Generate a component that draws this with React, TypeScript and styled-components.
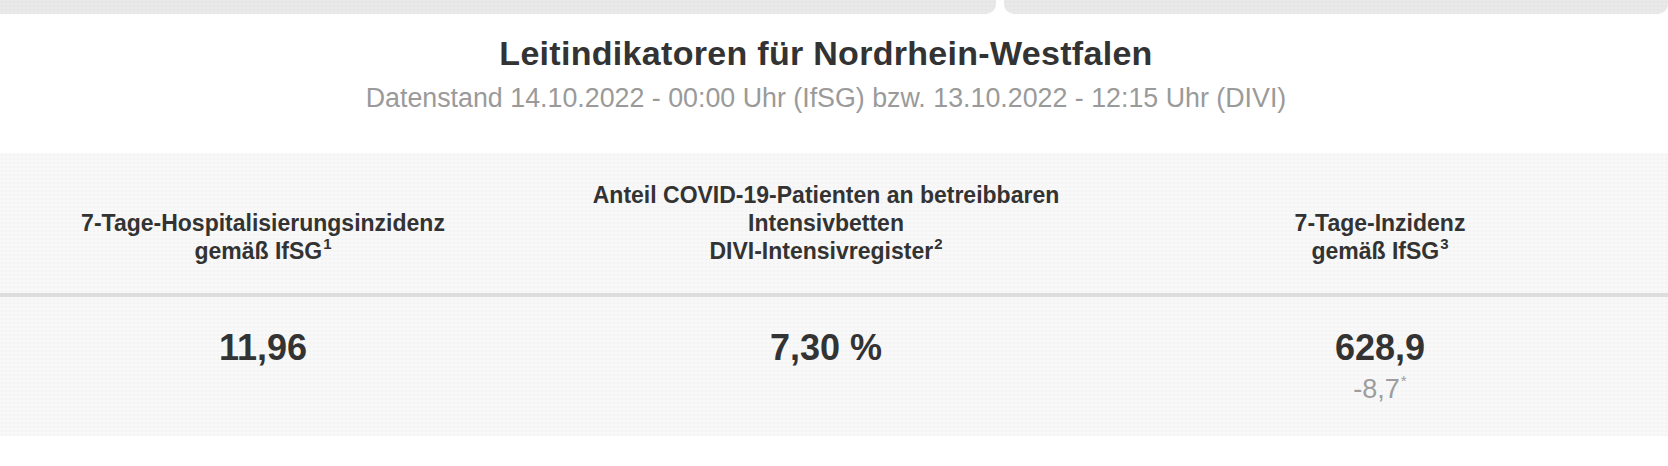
import React from "react";
import styled, { createGlobalStyle } from "styled-components";

const GlobalStyle = createGlobalStyle`
  html, body {
    margin: 0;
    padding: 0;
    background: #ffffff;
    font-family: "Liberation Sans", Arial, Helvetica, sans-serif;
    color: #333333;
  }
  * { box-sizing: border-box; }
`;

const Page = styled.div`
  width: 1668px;
  display: flex;
  flex-direction: column;
`;

const TabBar = styled.div`
  display: flex;
  gap: 8px;
  height: 14px;
`;

const Tab = styled.div<{ $grow: number; $flushLeft?: boolean }>`
  flex: ${(p) => p.$grow} 1 0;
  background-color: #e9e9e9;
  background-image: radial-gradient(#e4e4e4 0.7px, transparent 0.8px);
  background-size: 4px 4px;
  border-radius: ${(p) => (p.$flushLeft ? "0 0 10px 0" : "0 0 10px 10px")};
`;

const Heading = styled.header`
  display: flex;
  flex-direction: column;
  align-items: center;
  padding: 19px 16px 40px 0;
`;

const Title = styled.h1`
  margin: 0;
  font-size: 34px;
  line-height: 40px;
  font-weight: 700;
  color: #333333;
  letter-spacing: 0.3px;
`;

const Subtitle = styled.p`
  margin: 10px 0 0;
  font-size: 26.8px;
  line-height: 30px;
  font-weight: 400;
  color: #9a9a9a;
`;

const Table = styled.section`
  display: flex;
  flex-direction: column;
  background-color: #f8f8f8;
  background-image: radial-gradient(#f2f2f2 0.7px, transparent 0.8px);
  background-size: 4px 4px;
`;

const Row = styled.div<{ $head?: boolean }>`
  display: grid;
  grid-template-columns: 526px 600px 508px 1fr;
  align-items: ${(p) => (p.$head ? "end" : "start")};
  border-bottom: ${(p) => (p.$head ? "4px solid #dddddd" : "none")};
`;

const HeadCell = styled.div`
  padding: 28px 12px 28px;
  text-align: center;
  font-size: 23px;
  line-height: 28px;
  font-weight: 700;
  color: #333333;
`;

const Sup = styled.sup`
  font-size: 15px;
  line-height: 0;
  vertical-align: 10px;
  margin-left: 1px;
`;

const ValueCell = styled.div`
  padding: 29px 12px 28px;
  display: flex;
  flex-direction: column;
  align-items: center;
`;

const Value = styled.div`
  font-size: 36px;
  line-height: 44px;
  font-weight: 700;
  color: #333333;
`;

const Delta = styled.div`
  font-size: 27px;
  line-height: 38px;
  font-weight: 400;
  color: #9d9d9d;
`;

const DeltaMark = styled.sup`
  font-size: 15px;
  line-height: 0;
  vertical-align: 12px;
  margin-left: 1px;
`;

export default function App() {
  return (
    <>
      <GlobalStyle />
      <Page>
        <TabBar>
          <Tab $grow={3} $flushLeft />
          <Tab $grow={2} />
        </TabBar>
        <Heading>
          <Title>Leitindikatoren für Nordrhein-Westfalen</Title>
          <Subtitle>
            Datenstand 14.10.2022 - 00:00 Uhr (IfSG) bzw. 13.10.2022 - 12:15 Uhr (DIVI)
          </Subtitle>
        </Heading>
        <Table>
          <Row $head>
            <HeadCell>
              7-Tage-Hospitalisierungsinzidenz
              <br />
              gemäß IfSG<Sup>1</Sup>
            </HeadCell>
            <HeadCell>
              Anteil COVID-19-Patienten an betreibbaren
              <br />
              Intensivbetten
              <br />
              DIVI-Intensivregister<Sup>2</Sup>
            </HeadCell>
            <HeadCell>
              7-Tage-Inzidenz
              <br />
              gemäß IfSG<Sup>3</Sup>
            </HeadCell>
            <div />
          </Row>
          <Row>
            <ValueCell>
              <Value>11,96</Value>
            </ValueCell>
            <ValueCell>
              <Value>7,30 %</Value>
            </ValueCell>
            <ValueCell>
              <Value>628,9</Value>
              <Delta>
                -8,7<DeltaMark>*</DeltaMark>
              </Delta>
            </ValueCell>
            <div />
          </Row>
        </Table>
      </Page>
    </>
  );
}
